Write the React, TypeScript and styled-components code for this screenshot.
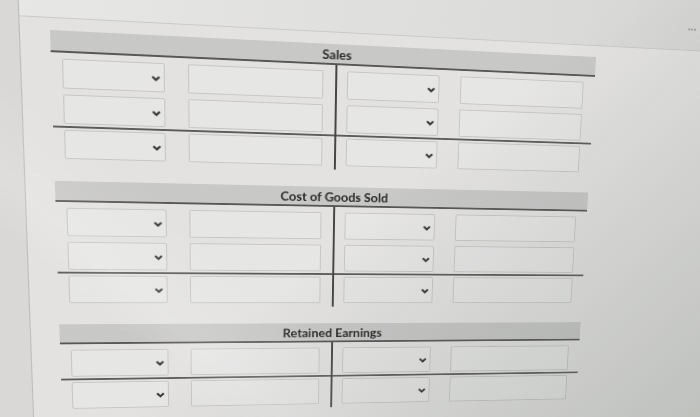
import React from "react";
import styled, { createGlobalStyle } from "styled-components";

// The screen was photographed at an angle: the flat page is laid out normally,
// then one projective transform maps the ledger's corners onto the photo.
type Pt = [number, number];

const LEDGER_W = 545;
const LEDGER_H = 400;
const LEDGER_X = 90;
const LEDGER_Y = 90;

const projectTo = (quad: Pt[]) => {
  const [[x0, y0], [x1, y1], [x2, y2], [x3, y3]] = quad;
  const dx1 = x1 - x2;
  const dx2 = x3 - x2;
  const dx3 = x0 - x1 + x2 - x3;
  const dy1 = y1 - y2;
  const dy2 = y3 - y2;
  const dy3 = y0 - y1 + y2 - y3;
  const den = dx1 * dy2 - dx2 * dy1;
  const g = (dx3 * dy2 - dx2 * dy3) / den;
  const h = (dx1 * dy3 - dx3 * dy1) / den;
  const a = x1 - x0 + g * x1;
  const b = x3 - x0 + h * x3;
  const d = y1 - y0 + g * y1;
  const e = y3 - y0 + h * y3;
  const W = LEDGER_W;
  const H = LEDGER_H;
  const m = [
    a / W, d / W, 0, g / W,
    b / H, e / H, 0, h / H,
    0, 0, 1, 0,
    x0 - (a * LEDGER_X) / W - (b * LEDGER_Y) / H,
    y0 - (d * LEDGER_X) / W - (e * LEDGER_Y) / H,
    0,
    1 - (g * LEDGER_X) / W - (h * LEDGER_Y) / H
  ];
  return `matrix3d(${m.map(n => n.toFixed(6)).join(",")})`;
};

const PLANE_TRANSFORM = projectTo([
  [50, 30],
  [596, 57],
  [576, 399],
  [62, 409]
]);

const GlobalStyle = createGlobalStyle`
  html, body {
    margin: 0;
    padding: 0;
    background: #dddcdb;
    overflow: hidden;
  }
`;

const Viewport = styled.div`
  position: relative;
  width: 700px;
  height: 417px;
  overflow: hidden;
  background: #dddcdb;
`;

const Plane = styled.div`
  display: flex;
  width: 820px;
  height: 560px;
  transform-origin: 0 0;
  transform: ${PLANE_TRANSFORM};
  background: #e3e2e1;
`;

const Sidebar = styled.aside`
  flex: 0 0 62px;
  background: #d9d8d7;
  border-right: 1px solid #bdbcbb;
`;

const Column = styled.div`
  flex: 1;
  display: flex;
  flex-direction: column;
`;

const TopBar = styled.header`
  height: 78px;
  box-sizing: border-box;
  display: flex;
  justify-content: flex-end;
  align-items: flex-end;
  padding: 0 74px 20px 0;
  background: linear-gradient(90deg, #e7e7e6, #d5d5d4);
  border-bottom: 1px solid #c9c9c8;
`;

const Dots = styled.span`
  font: 700 12px "Lato", sans-serif;
  line-height: 1;
  letter-spacing: 0.5px;
  color: #7a7a7a;
`;

const Main = styled.main`
  display: flex;
  flex-direction: column;
  gap: 19px;
  padding: 12px 0 0 27px;
`;

const Account = styled.section`
  width: ${LEDGER_W}px;
`;

const AccountHeader = styled.h3`
  margin: 0;
  height: 22px;
  box-sizing: border-box;
  padding-top: 1px;
  display: flex;
  align-items: center;
  justify-content: center;
  background: #c8c8c7;
  border-bottom: 2px solid #575757;
  font: 700 13px "Lato", sans-serif;
  color: #2b2b2b;
`;

const AccountBody = styled.div`
  display: grid;
  grid-template-columns: 1fr 1fr;
`;

const Side = styled.div<{ $debit?: boolean }>`
  display: flex;
  flex-direction: column;
  gap: 6px;
  padding: 6px 12px 4px 10px;
  border-right: ${p => (p.$debit ? "2px solid #454545" : "0")};
`;

const Field = styled.div`
  display: grid;
  grid-template-columns: 95px 1fr;
  gap: 22px;
  height: 30px;
`;

const Rule = styled.hr`
  flex-shrink: 0;
  margin: -4px -12px -4px -10px;
  height: 2px;
  border: 0;
  background: #5c5c5c;
`;

const SelectBox = styled.div`
  position: relative;
  display: flex;
`;

const Select = styled.select`
  appearance: none;
  width: 100%;
  height: 100%;
  margin: 0;
  padding: 0 20px 0 8px;
  border: 1px solid #c6c6c5;
  border-radius: 2px;
  background: #e6e6e5;
`;

const Chevron = styled.svg`
  position: absolute;
  right: 4px;
  top: 50%;
  margin-top: -2px;
  pointer-events: none;
`;

const Amount = styled.input`
  min-width: 0;
  width: 100%;
  height: 100%;
  box-sizing: border-box;
  margin: 0;
  border: 1px solid #c6c6c5;
  border-radius: 1px;
  background: #e6e6e5;
`;

const Glare = styled.div`
  position: absolute;
  inset: 0;
  pointer-events: none;
  background:
    linear-gradient(
      140deg,
      rgba(255, 255, 255, 0) 52%,
      rgba(88, 100, 90, 0.26) 100%
    ),
    linear-gradient(
      40deg,
      rgba(255, 255, 255, 0) 18%,
      rgba(255, 255, 255, 0.14) 24%,
      rgba(255, 255, 255, 0) 36%
    );
`;

const accounts = [
  { title: "Sales", rows: 3, ruleAfter: 2 },
  { title: "Cost of Goods Sold", rows: 3, ruleAfter: 2 },
  { title: "Retained Earnings", rows: 2, ruleAfter: 1 }
];

const Entry = () => (
  <Field>
    <SelectBox>
      <Select defaultValue="">
        <option value="" />
      </Select>
      <Chevron width="9" height="6" viewBox="0 0 9 6">
        <path d="M1.2 1.2 L4.5 4.5 L7.8 1.2" fill="none" stroke="#363636" strokeWidth="2.1" />
      </Chevron>
    </SelectBox>
    <Amount type="text" />
  </Field>
);

const LedgerSide = ({ rows, ruleAfter, debit }: { rows: number; ruleAfter: number; debit?: boolean }) => (
  <Side $debit={debit}>
    {Array.from({ length: rows }, (_, i) => (
      <React.Fragment key={i}>
        {i === ruleAfter && <Rule />}
        <Entry />
      </React.Fragment>
    ))}
  </Side>
);

const App = () => (
  <Viewport>
    <GlobalStyle />
    <Plane>
      <Sidebar />
      <Column>
        <TopBar>
          <Dots>...</Dots>
        </TopBar>
        <Main>
          {accounts.map(acc => (
            <Account key={acc.title}>
              <AccountHeader>{acc.title}</AccountHeader>
              <AccountBody>
                <LedgerSide rows={acc.rows} ruleAfter={acc.ruleAfter} debit />
                <LedgerSide rows={acc.rows} ruleAfter={acc.ruleAfter} />
              </AccountBody>
            </Account>
          ))}
        </Main>
      </Column>
    </Plane>
    <Glare />
  </Viewport>
);

export default App;
